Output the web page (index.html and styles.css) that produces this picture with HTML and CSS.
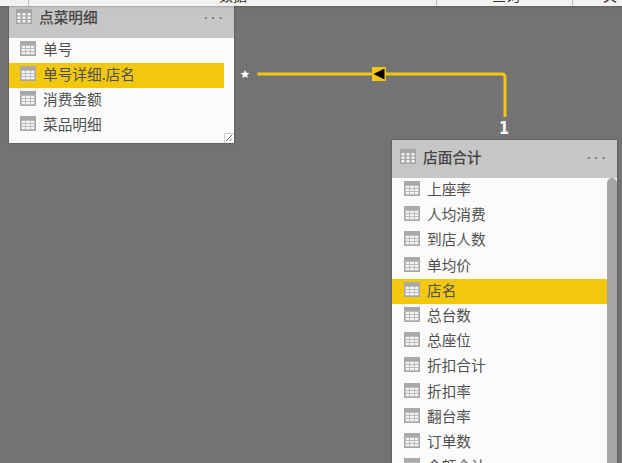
FILE: index.html
```html
<!DOCTYPE html>
<html lang="zh">
<head>
<meta charset="utf-8">
<title>关系视图</title>
<link rel="stylesheet" href="styles.css">
</head>
<body>
<svg width="0" height="0" class="defs">
  <defs>
    <symbol id="tbl" viewBox="0 0 16 15">
      <rect width="16" height="15" fill="#a9a9a9"/>
      <rect x="1" y="4" width="14" height="10" fill="#bdbdbd"/>
      <path d="M2 5h3v2h-3zM6 5h4v2h-4zM11 5h3v2h-3zM2 8h3v2h-3zM6 8h4v2h-4zM11 8h3v2h-3zM2 11h3v2h-3zM6 11h4v2h-4zM11 11h3v2h-3z" fill="#f4f4f4"/>
    </symbol>
    <symbol id="tblh" viewBox="0 0 16 15">
      <rect width="16" height="15" fill="#a6a6a6"/>
      <path d="M1.500 4h3v2.500h-3zM6.500 4h3v2.500h-3zM11.500 4h3v2.500h-3zM1.500 7.500h3v2.500h-3zM6.500 7.500h3v2.500h-3zM11.500 7.500h3v2.500h-3zM1.500 11h3v2.500h-3zM6.500 11h3v2.500h-3zM11.500 11h3v2.500h-3z" fill="#f2f2f2"/>
    </symbol>
  </defs>
</svg>
<div class="topbar">
  <i class="sep sep-a"></i><i class="sep sep-b"></i><i class="sep sep-c"></i>
  <span class="tab tab-a">数据</span>
  <span class="tab tab-b">查询</span>
  <span class="tab tab-c">关系</span>
</div>
<main class="canvas">
  <svg class="links" width="622" height="463" viewBox="0 0 622 463">
    <path d="M257.500 74H502q3 0 3 3V117" fill="none" stroke="#f2c80f" stroke-width="3"/>
    <rect x="372" y="67" width="14" height="14" fill="#f2c80f"/>
    <path d="M373.500 74L384.500 68.500V79.500Z" fill="#000"/>
    <path d="M245 70l1.300 2.700 3 .4-2.200 2 .6 3-2.700-1.500-2.700 1.500.6-3-2.200-2 3-.4z" fill="#fff"/>
  </svg>
  <span class="one">1</span>
  <section class="card card-a">
    <header class="head"><svg class="ico-h"><use href="#tblh"/></svg><h2>点菜明细</h2><span class="more">···</span></header>
    <ul class="rows">
      <li class="row"><svg class="ico"><use href="#tbl"/></svg>单号</li>
      <li class="row on"><svg class="ico"><use href="#tbl"/></svg>单号详细.店名</li>
      <li class="row"><svg class="ico"><use href="#tbl"/></svg>消费金额</li>
      <li class="row"><svg class="ico"><use href="#tbl"/></svg>菜品明细</li>
    </ul>
    <span class="grip"><svg width="8" height="8" viewBox="0 0 8 8"><path d="M1 7L7 1M4.500 7L7 4.500" stroke="#666" fill="none"/></svg></span>
  </section>
  <section class="card card-b">
    <header class="head"><svg class="ico-h"><use href="#tblh"/></svg><h2>店面合计</h2><span class="more">···</span></header>
    <div class="body">
      <ul class="rows">
        <li class="row"><svg class="ico"><use href="#tbl"/></svg>上座率</li>
        <li class="row"><svg class="ico"><use href="#tbl"/></svg>人均消费</li>
        <li class="row"><svg class="ico"><use href="#tbl"/></svg>到店人数</li>
        <li class="row"><svg class="ico"><use href="#tbl"/></svg>单均价</li>
        <li class="row on"><svg class="ico"><use href="#tbl"/></svg>店名</li>
        <li class="row"><svg class="ico"><use href="#tbl"/></svg>总台数</li>
        <li class="row"><svg class="ico"><use href="#tbl"/></svg>总座位</li>
        <li class="row"><svg class="ico"><use href="#tbl"/></svg>折扣合计</li>
        <li class="row"><svg class="ico"><use href="#tbl"/></svg>折扣率</li>
        <li class="row"><svg class="ico"><use href="#tbl"/></svg>翻台率</li>
        <li class="row"><svg class="ico"><use href="#tbl"/></svg>订单数</li>
        <li class="row"><svg class="ico"><use href="#tbl"/></svg>金额合计</li>
      </ul>
      <div class="thumb"></div>
    </div>
  </section>
</main>
</body>
</html>
```
FILE: styles.css
```css
* { box-sizing: border-box; }
html, body { margin: 0; padding: 0; width: 622px; height: 463px; overflow: hidden; }
body {
  background: #737373;
  font-family: "Noto Sans CJK SC", "Liberation Sans", sans-serif;
  color: #4a4a4a;
  position: relative;
}
.defs { position: absolute; }
.topbar {
  position: absolute; left: 0; top: 0; width: 622px; height: 6px;
  background: #f3f2f1; overflow: hidden; z-index: 3;
  box-shadow: 0 0 3px rgba(0,0,0,.35);
}
.tab { position: absolute; top: -14px; font-size: 14px; line-height: 18px; color: #333; }
.tab-a { left: 219px; }
.tab-b { left: 492px; }
.tab-c { left: 603px; }
.sep { position: absolute; top: 0; width: 1px; height: 6px; background: #bbb; }
.sep-a { left: 28px; }
.sep-b { left: 436px; }
.sep-c { left: 572px; }
.canvas { position: absolute; inset: 0; }
.links { position: absolute; left: 0; top: 0; }
.one { position: absolute; left: 499px; top: 118px; font: bold 17px/20px "DejaVu Sans", sans-serif; color: #fff; transform: scaleX(.85); transform-origin: left; }
.card { position: absolute; width: 225px; background: #fbfbfb; box-shadow: 0 0 2px rgba(0,0,0,.45); }
.card-a { left: 9px; top: 0; height: 143px; }
.card-b { left: 392px; top: 140px; height: 323px; overflow: hidden; }
.head { display: flex; align-items: center; background: #c6c6c6; height: 38px; padding: 0 8px 5px 7px; }
.card-b .head { padding: 0 8px 5px 8px; }
.ico-h { width: 16px; height: 15px; margin-right: 7px; flex: none; }
h2 { margin: 0; font-size: 14.67px; line-height: 20px; font-weight: 500; color: #444; flex: 1; }
.more { margin-top: 3px; font: 700 13px/16px "Liberation Sans", sans-serif; letter-spacing: 3px; color: #777; }
.rows { list-style: none; margin: 0; padding: 0; }
.card-b .rows { flex: 1; }
.row { display: flex; align-items: center; height: 25px; padding: 0 0 4px 11px; font-size: 14.67px; color: #505050; }
.row.on { background: #f2c80f; }
.card-a .rows { width: 215px; }
.ico { width: 16px; height: 15px; margin-right: 7px; flex: none; }
.card-b .row { height: 25.2px; padding-left: 12px; }
.grip { position: absolute; right: 0; bottom: 0; width: 10px; height: 10px; background: #fff; border: 1px solid #ccc; border-width: 1px 0 0 1px; display: flex; }
.body { display: flex; }
.thumb { width: 10px; flex: none; background: #a6a6a6; border-radius: 5px 5px 0 0; height: 285px; }
```
